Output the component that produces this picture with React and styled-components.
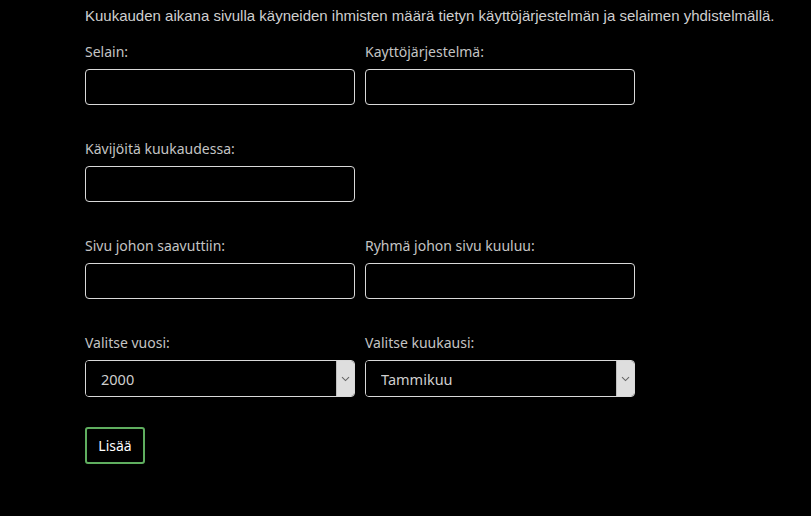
import React, { useState } from 'react';
import styled, { createGlobalStyle } from 'styled-components';

const GlobalStyle = createGlobalStyle`
  html, body {
    margin: 0;
    padding: 0;
    background: #000;
  }
  body {
    font-family: "Open Sans", "Noto Sans", sans-serif;
  }
`;

const Page = styled.div`
  width: 811px;
  height: 516px;
  background: #000;
  padding: 6px 0 0 85px;
  box-sizing: border-box;
  overflow: hidden;
`;

const Intro = styled.p`
  margin: 0 0 16px 0;
  font-family: "Liberation Sans", Arial, sans-serif;
  font-size: 15px;
  line-height: 20px;
  color: #cfcfcf;
  white-space: nowrap;
`;

const Form = styled.form`
  display: grid;
  grid-template-columns: 270px 270px;
  column-gap: 10px;
  row-gap: 34px;
`;

const Field = styled.div`
  display: flex;
  flex-direction: column;
`;

const Label = styled.label`
  font-family: "Noto Sans", "Open Sans", sans-serif;
  font-size: 14px;
  line-height: 20px;
  color: #c4c4c4;
  margin-bottom: 7px;
`;

const TextInput = styled.input`
  height: 36px;
  box-sizing: border-box;
  background: #000;
  border: 1px solid #d9d9d9;
  border-radius: 4px;
  color: #ddd;
  font-size: 14px;
  padding: 0 12px;
  outline: none;
`;

const SelectBox = styled.div`
  display: flex;
  height: 37px;
  box-sizing: border-box;
  border: 1px solid #d9d9d9;
  border-radius: 4px;
  overflow: hidden;
`;

const Select = styled.select`
  flex: 1;
  appearance: none;
  border: none;
  background: #000;
  color: #cfcfcf;
  font-family: "Noto Sans", "Open Sans", sans-serif;
  font-size: 14.5px;
  padding: 0 0 0 15px;
  outline: none;
`;

const ArrowBox = styled.span`
  width: 17px;
  background: #dedede;
  border-left: 1px solid #bdbdbd;
  display: flex;
  align-items: center;
  justify-content: center;
`;

const ButtonRow = styled.div`
  grid-column: 1 / 3;
  margin-top: -4px;
`;

const Button = styled.button`
  width: 60px;
  height: 37px;
  background: #000;
  border: 2px solid #5fae5f;
  border-radius: 3px;
  color: #fff;
  font-family: "Noto Sans", "Open Sans", sans-serif;
  font-size: 14px;
  cursor: pointer;
`;

const Chevron = () => (
  <svg width="9" height="6" viewBox="0 0 9 6">
    <path d="M1 1.2 L4.5 4.6 L8 1.2" fill="none" stroke="#666" strokeWidth="1.1" />
  </svg>
);

const years = Array.from({ length: 25 }, (_, i) => 2000 + i);
const months = ['Tammikuu', 'Helmikuu', 'Maaliskuu', 'Huhtikuu', 'Toukokuu', 'Kesäkuu', 'Heinäkuu', 'Elokuu', 'Syyskuu', 'Lokakuu', 'Marraskuu', 'Joulukuu'];

const Dropdown = ({ options, value, onChange }) => (
  <SelectBox>
    <Select value={value} onChange={e => onChange(e.target.value)}>
      {options.map(o => <option key={o} value={o}>{o}</option>)}
    </Select>
    <ArrowBox><Chevron /></ArrowBox>
  </SelectBox>
);

export default function App() {
  const [year, setYear] = useState('2000');
  const [month, setMonth] = useState('Tammikuu');

  return (
    <Page>
      <GlobalStyle />
      <Intro>Kuukauden aikana sivulla käyneiden ihmisten määrä tietyn käyttöjärjestelmän ja selaimen yhdistelmällä.</Intro>
      <Form onSubmit={e => e.preventDefault()}>
        <Field>
          <Label>Selain:</Label>
          <TextInput />
        </Field>
        <Field>
          <Label>Kayttöjärjestelmä:</Label>
          <TextInput />
        </Field>
        <Field>
          <Label>Kävijöitä kuukaudessa:</Label>
          <TextInput />
        </Field>
        <div />
        <Field>
          <Label>Sivu johon saavuttiin:</Label>
          <TextInput />
        </Field>
        <Field>
          <Label>Ryhmä johon sivu kuuluu:</Label>
          <TextInput />
        </Field>
        <Field>
          <Label>Valitse vuosi:</Label>
          <Dropdown options={years} value={year} onChange={setYear} />
        </Field>
        <Field>
          <Label>Valitse kuukausi:</Label>
          <Dropdown options={months} value={month} onChange={setMonth} />
        </Field>
        <ButtonRow>
          <Button type="submit">Lisää</Button>
        </ButtonRow>
      </Form>
    </Page>
  );
}
